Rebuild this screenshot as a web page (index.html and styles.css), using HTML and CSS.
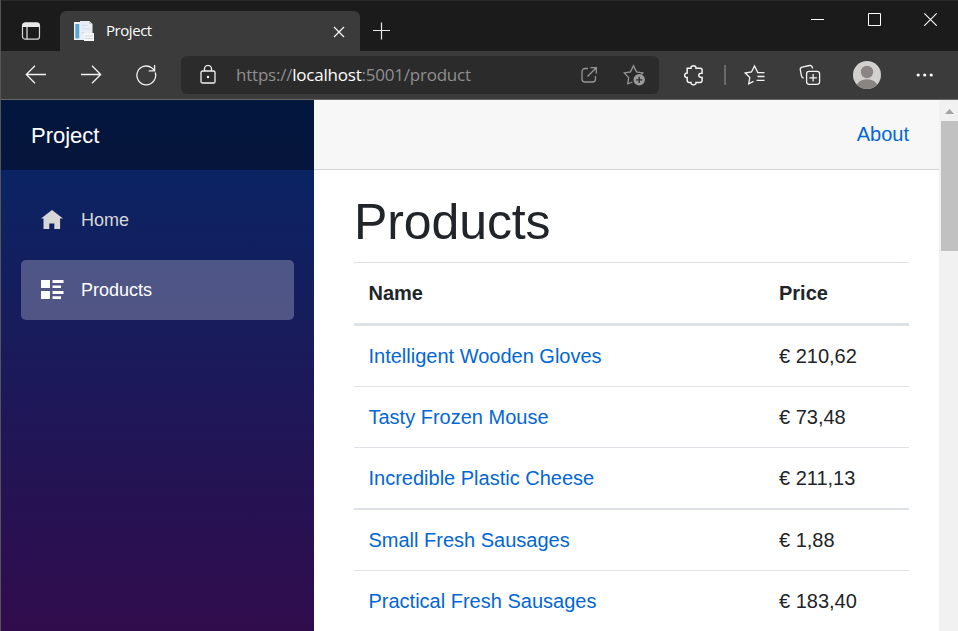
FILE: index.html
```html
<!DOCTYPE html>
<html lang="en">
<head>
<meta charset="utf-8">
<title>Project</title>
<link rel="stylesheet" href="styles.css">
</head>
<body>
<div class="window">
  <header class="tabstrip">
    <div class="tab-menu">
      <svg width="20" height="20" viewBox="0 0 20 20"><rect x="1.500" y="1.800" width="17" height="16.400" rx="2.800" fill="none" stroke="#d8d8d8" stroke-width="1.200"/><path d="M1.500 6V4.600a2.800 2.800 0 0 1 2.800-2.800h11.400a2.800 2.800 0 0 1 2.800 2.800V6z" fill="#e8e8e8"/><path d="M6 6v12" stroke="#e8e8e8" stroke-width="1.200"/></svg>
    </div>
    <div class="tab">
      <svg class="favicon" width="20" height="20" viewBox="0 0 20 20"><path d="M0 1h7v18H0z" fill="#eef2f5"/><path d="M1.300 3h4v14.500h-4z" fill="#5aa5cf"/><path d="M6 0h9l3.500 3v16H6z" fill="#e9edf4"/><path d="M15 0l3.500 3H15z" fill="#c5ccd6"/><path d="M7.500 4.500h6M7.500 8h9M7.500 11.500h3" stroke="#d5dce8" stroke-width="1"/><path d="M10 12h10v8H10z" fill="#f6f7fa"/><path d="M11 15h8M11 17.500h8" stroke="#d3d9e4"/></svg>
      <span class="tab-title">Project</span>
      <svg class="tab-close" width="12" height="12" viewBox="0 0 12 12"><path d="M1 1l10 10M11 1L1 11" stroke="#f4f4f4" stroke-width="1.300"/></svg>
    </div>
    <svg class="new-tab" width="18" height="18" viewBox="0 0 18 18"><path d="M9.500 .5v17M1 8.500h17" stroke="#e8e8e8" stroke-width="1.200"/></svg>
    <div class="controls">
      <svg width="13" height="14" viewBox="0 0 13 14"><path d="M0 7.500h13" stroke="#fff"/></svg>
      <svg width="13" height="14" viewBox="0 0 13 14"><path d="M.5 1.500h12v12H.5z" fill="none" stroke="#fff"/></svg>
      <svg width="13" height="14" viewBox="0 0 13 14"><path d="M.3 1.300l12.400 12.400M12.700 1.300L.3 13.700" stroke="#fff" stroke-width="1.100"/></svg>
    </div>
  </header>

  <div class="toolbar">
    <div class="nav-buttons">
      <svg width="22" height="22" viewBox="0 0 22 22"><path d="M21 10.500H1.500M10 1.800l-8.700 8.700 8.700 8.700"/></svg>
      <svg width="22" height="22" viewBox="0 0 22 22"><path d="M1 10.500h19.500M12 1.800l8.700 8.700-8.700 8.700"/></svg>
      <svg width="22" height="22" viewBox="0 0 22 22"><path d="M20.200 8.500A9.400 9.400 0 1 1 17 4l2.600 2.600M19.600 1v5.900h-5.900"/></svg>
    </div>
    <div class="address">
      <svg class="lock" width="16" height="20" viewBox="0 0 16 20"><rect x="1" y="6" width="14" height="12" rx="1.600"/><path d="M4.500 6V3.900a3.500 3.500 0 0 1 7 0V6"/><circle cx="8" cy="12" r="1.200" fill="#fff" stroke="none"/></svg>
      <div class="url">https://<b>localhost</b>:5001/product</div>
      <svg class="open" width="16" height="16" viewBox="0 0 16 16"><path d="M7 1.500H4A3 3 0 0 0 1 4.500v7.500a3 3 0 0 0 3 3h7.500a3 3 0 0 0 3-3V9M9.500 .7h5.800v5.800M15 1L6.500 9.500"/></svg>
      <svg class="fav-add" width="24" height="22" viewBox="0 0 24 22"><path d="M9.500 18l-4.800 1.800 1-6.200L1.300 8.900l6.200-1L10.500 1.700l3 6.200 6.300 1-1.500 1.700"/><circle cx="16.200" cy="15.800" r="5.700" fill="#9a9a9a" stroke="none"/><path d="M16.200 12.700v6.200M13.100 15.800h6.200" stroke="#2b2b2b"/></svg>
    </div>
    <div class="tools">
      <svg width="20" height="22" viewBox="0 0 20 22"><path d="M3.200 4.300H7c-.6-3.500 5.600-3.500 5 0h4.300a1.800 1.800 0 0 1 1.800 1.800v3.100c-4.500-.5-4.500 4.700 0 4.200v3.200a1.800 1.800 0 0 1-1.800 1.800H12c.3 3.300-5.300 3.300-5 0H5a1.800 1.800 0 0 1-1.800-1.800v-3c-3.400.2-3.400-4.700 0-4.500z" stroke-width="1.500"/></svg>
      <span class="divider"></span>
      <svg class="favorites" width="22" height="22" viewBox="0 0 22 22"><path d="M20.500 8.600h-6.700L10.500 1.900 7.500 8l-6.300 1 4.600 4.500-1.100 6.300 4.800-2.400M13.500 12.500h7M12.500 16.300h8"/></svg>
      <svg class="collections" width="22" height="22" viewBox="0 0 22 22"><rect x="7.600" y="7.300" width="13" height="13" rx="2.500"/><path d="M14.100 10v7.600M10.300 13.800h7.600M4.700 14.200c-1.400-.2-1.900-.8-2.200-2.200L1.300 5.900C1 4.500 1.800 3.400 3.100 3.100l7.400-1.600c1.700-.3 2.700.4 3.200 3"/></svg>
      <svg class="avatar" width="28" height="28" viewBox="0 0 28 28"><clipPath id="round"><circle cx="14" cy="14" r="14"/></clipPath><g clip-path="url(#round)" stroke="none"><path d="M0 0h28v28H0z" fill="#d2d0ce"/><circle cx="14" cy="11" r="6.200" fill="#8a8583"/><ellipse cx="14" cy="25.500" rx="10.300" ry="7.300" fill="#8a8583"/></g></svg>
      <svg class="more" width="18" height="6" viewBox="0 0 18 6"><g fill="#fff" stroke="none"><circle cx="2.200" cy="3" r="1.600"/><circle cx="8.700" cy="3" r="1.600"/><circle cx="15.200" cy="3" r="1.600"/></g></svg>
    </div>
  </div>

  <div class="page">
    <aside class="sidebar">
      <div class="brand">Project</div>
      <nav class="menu">
        <a class="item">
          <svg width="24" height="22" viewBox="0 0 24 22"><path d="M11 1L0 9.500h2.500V20h5.800v-5.500h5V20h5.800V9.500H22z" fill="#d7d7d7"/></svg>
          <span>Home</span>
        </a>
        <a class="item active">
          <svg width="24" height="22" viewBox="0 0 24 22"><path d="M0 1h9v8H0zM0 12h9v8H0zM11.500 1H22.500v3h-11zM11.500 6.500H20v2.500h-8.500zM11.500 12h11v3h-11zM11.500 17.300H20V20h-8.500z" fill="#fff"/></svg>
          <span>Products</span>
        </a>
      </nav>
    </aside>
    <main class="main">
      <div class="top-row"><a>About</a></div>
      <div class="content">
        <h1>Products</h1>
        <div class="table">
          <div class="row head"><span>Name</span><span>Price</span></div>
          <div class="row first"><a>Intelligent Wooden Gloves</a><span>€ 210,62</span></div>
          <div class="row"><a>Tasty Frozen Mouse</a><span>€ 73,48</span></div>
          <div class="row"><a>Incredible Plastic Cheese</a><span>€ 211,13</span></div>
          <div class="row thick"><a>Small Fresh Sausages</a><span>€ 1,88</span></div>
          <div class="row"><a>Practical Fresh Sausages</a><span>€ 183,40</span></div>
        </div>
      </div>
    </main>
    <div class="scrollbar">
      <svg width="19" height="21" viewBox="0 0 19 21"><path d="M6 14l4.500-5 4.500 5z" fill="#a3a3a3"/></svg>
      <div class="thumb"></div>
    </div>
  </div>
</div>
</body>
</html>
```

FILE: styles.css
```css
* { box-sizing: border-box; }

body {
  margin: 0;
  overflow: hidden;
  font: 20px/30px "Liberation Sans", Arial, sans-serif;
  color: #212529;
}

svg { display: block; flex: none; }

.window {
  display: flex;
  flex-direction: column;
  width: 958px;
  height: 631px;
  background: #fff;
  border-left: 1px solid #555;
  overflow: hidden;
}

.tabstrip {
  display: flex;
  flex: none;
  height: 51px;
  background: #1b1b1b;
  border-top: 1px solid #2b2b2b;
}

.tab-menu {
  width: 59px;
  padding: 20px 0 0 20px;
}

.tab {
  display: flex;
  align-items: center;
  width: 300px;
  margin-top: 10px;
  padding: 0 15px 0 14px;
  background: #3b3b3b;
  border-radius: 6px 6px 0 0;
}

.tab-title {
  flex: 1;
  margin-left: 12px;
  padding-bottom: 2px;
  font: 15px/20px "Open Sans", sans-serif;
  letter-spacing: -0.45px;
  color: #fff;
}

.tab-close { margin-top: 1px; }

.new-tab { margin: 21px 0 0 12px; }

.controls {
  display: flex;
  gap: 43.5px;
  margin: 11px 21px 0 auto;
}

.toolbar {
  display: flex;
  flex: none;
  align-items: center;
  height: 49px;
  padding-bottom: 1px;
  background: #3b3b3b;
  border-bottom: 1px solid #686868;
}

.toolbar svg {
  fill: none;
  stroke: #f2f2f2;
  stroke-width: 1.3;
}

.nav-buttons {
  display: flex;
  gap: 33px;
  width: 180px;
  padding-left: 24px;
}

.address {
  display: flex;
  align-items: center;
  width: 478px;
  height: 38px;
  padding: 0 12px 0 19px;
  background: #2b2b2b;
  border-radius: 6px;
}

.url {
  flex: 1;
  margin-left: 20px;
  font: 17px/24px "Open Sans", sans-serif;
  letter-spacing: -0.22px;
  color: #8f8f8f;
}

.url b { font-weight: 400; color: #fff; }

.toolbar .open, .toolbar .fav-add { stroke: #969696; }

.fav-add { margin-left: 26px; }

.tools {
  display: flex;
  align-items: center;
  flex: 1;
  padding-left: 25px;
}

.divider {
  width: 2px;
  height: 20px;
  margin-left: 20px;
  background: #696969;
}

.favorites { margin-left: 18px; }
.collections { margin-left: 33px; }
.avatar { margin-left: 32px; }
.more { margin-left: 35px; }

.page { display: flex; flex: 1; }

.sidebar {
  width: 313px;
  background: linear-gradient(180deg, #052767 0, #3a0647 645px);
}

.brand {
  height: 70px;
  padding: 21px 30px 19px;
  background: rgba(0, 0, 0, 0.4);
  font-size: 22px;
  color: #fff;
}

.menu {
  display: flex;
  flex-direction: column;
  gap: 10px;
  padding: 20px;
}

.item {
  display: flex;
  align-items: center;
  gap: 16px;
  height: 60px;
  padding-left: 20px;
  border-radius: 5px;
  font-size: 18px;
  color: #d7d7d7;
}

.active { background: rgba(255, 255, 255, 0.25); color: #fff; }

.main { flex: 1; }

.top-row {
  display: flex;
  justify-content: flex-end;
  height: 70px;
  padding: 19px 30px 0 0;
  background: #f7f7f7;
  border-bottom: 1px solid #d6d5d5;
}

.main a { color: #0366d6; }

.content { padding: 22px 30px 0 40px; }

h1 {
  margin: 0 0 10px;
  font-size: 50px;
  font-weight: 400;
  line-height: 60px;
  letter-spacing: -0.1px;
}

.row {
  display: grid;
  grid-template-columns: 410.5px 1fr;
  padding: 15px 15px 15px 14.5px;
  border-top: 1px solid #dee2e6;
}

.head { border-bottom: 3px solid #dee2e6; font-weight: 700; }
.first { border-top: 0; }
.thick { border-top-width: 2px; }

.scrollbar { width: 19px; background: #f1f1f1; }

.thumb {
  width: 17px;
  height: 130px;
  margin-left: 2px;
  background: #c1c1c1;
}
```
